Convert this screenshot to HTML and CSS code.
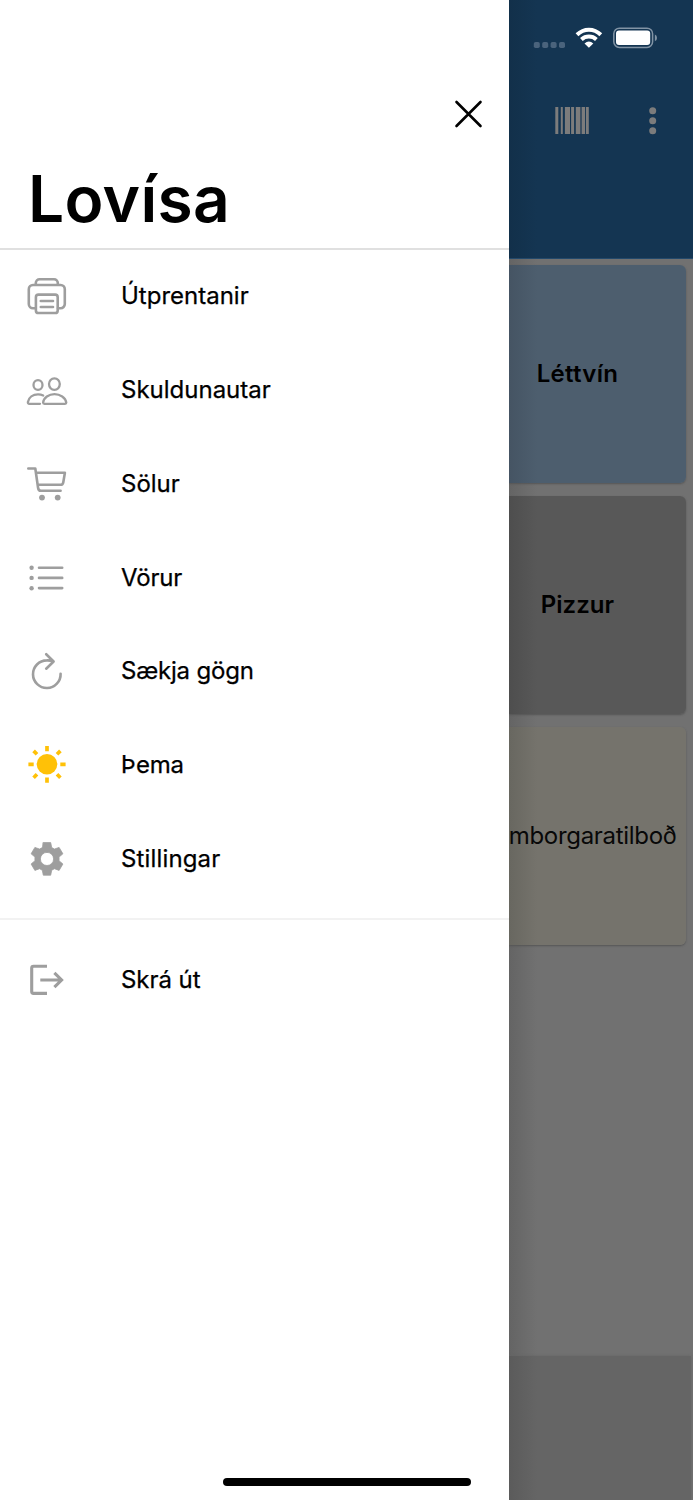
FILE: index.html
```html
<!DOCTYPE html>
<html lang="is">
<head>
<meta charset="utf-8">
<title>Lovísa</title>
<link rel="stylesheet" href="styles.css">
</head>
<body>
<div class="screen">
  <aside class="drawer">
    <header class="drawer-head">
      <button class="close" aria-label="Loka"><svg viewBox="0 0 32 32" width="32" height="32"><path d="M4.5 4L28.5 28M28.5 4L4.5 28"/></svg></button>
      <h1 class="title">Lovísa</h1>
    </header>
    <nav class="menu">
      <a class="item"><svg class="icon" viewBox="23 272 48 48"><path d="M35.5 308.2H33a4.2 4.2 0 0 1-4.2-4.2V289.2a4.2 4.2 0 0 1 4.2-4.2H60.6a4.2 4.2 0 0 1 4.2 4.2V304a4.2 4.2 0 0 1-4.2 4.2H58M35.8 284.6V283a3.8 3.8 0 0 1 3.8-3.8H54a3.8 3.8 0 0 1 3.8 3.8v1.6M40.8 301H53M40.8 307H53"/><rect x="35.9" y="294.6" width="21.8" height="18.4" rx="2.6"/></svg><span class="label l1">Útprentanir</span></a>
      <a class="item"><svg class="icon thin" viewBox="23 366 48 48"><ellipse cx="38" cy="385" rx="4.5" ry="4.9"/><ellipse cx="54.4" cy="384.1" rx="5.4" ry="5.8"/><path d="M43.1 402.6C43.5 397.5 49 394.1 54.5 394.1S65.6 397.5 66.3 402.6Q66.3 403.8 65 403.8H44.5Q43.1 403.8 43.1 402.6ZM40 403.8H29.4Q27.6 403.8 27.9 402C28.8 397.3 33 394.4 38 394.4Q40.9 394.4 43.2 395.5"/></svg><span class="label l2">Skuldunautar</span></a>
      <a class="item"><svg class="icon" viewBox="23 459.8 48 48"><path d="M28.3 468.3H35.3L38.1 487.8Q38.5 490.6 41 490.6H60.6M36 472.6H64.9L63.3 482Q62.9 484.6 60.5 484.6H37.8"/><g class="solid"><circle cx="42" cy="497.4" r="2.9"/><circle cx="57.7" cy="497.4" r="2.9"/></g></svg><span class="label l3">Sölur</span></a>
      <a class="item"><svg class="icon" viewBox="23 553.5 48 48"><path class="bars" d="M39 567.3H62.2M39 577.4H62.2M39 587.6H62.2"/><g class="solid"><circle cx="31.6" cy="567.2" r="2.2"/><circle cx="31.6" cy="577.4" r="2.2"/><circle cx="31.6" cy="587.7" r="2.2"/></g></svg><span class="label l4">Vörur</span></a>
      <a class="item"><svg class="icon" viewBox="23 647 48 48"><path d="M60.6 673.7A13.8 13.8 0 1 1 46.8 660.4Q50.2 660.3 53.4 661.3M46.2 654.2L53.6 661.5L46.2 668.7"/></svg><span class="label l5">Sækja gögn</span></a>
      <a class="item"><svg class="icon sun" viewBox="23 740.9 48 48"><circle cx="47" cy="764.2" r="10.3"/><path d="M47 745.8v5.3M47 777.3v5.3M28.4 764.2h5.3M60.3 764.2h5.3M33.6 750.8l3.4 3.4M60.4 750.8l-3.4 3.4M33.6 777.6l3.4-3.4M60.4 777.6l-3.4-3.4"/></svg><span class="label l6">Þema</span></a>
      <a class="item"><svg class="icon gear" viewBox="23 834.8 48 48"><path fill-rule="evenodd" d="M43.3 842.4H50.7L51.7 847.4Q53 848 54.4 848.9L59.1 847.2L62.9 853.6L59 856.9Q59.2 858.7 59 860.5L62.9 863.8L59.1 870.2L54.4 868.5Q53 869.4 51.7 870L50.7 875H43.3L42.3 870Q41 869.4 39.6 868.5L34.9 870.2L31.1 863.8L35 860.5Q34.8 858.7 35 856.9L31.1 853.6L34.9 847.2L39.6 848.9Q41 848 42.3 847.4ZM47 852.1A6.6 6.6 0 1 0 47 865.3A6.6 6.6 0 1 0 47 852.1Z"/></svg><span class="label l7">Stillingar</span></a>
    </nav>
    <a class="item logout"><svg class="icon exit" viewBox="23 955.2 48 48"><path d="M47 965.4H33.5Q31.7 965.4 31.7 967.2V990.8Q31.7 992.6 33.5 992.6H47M40.3 979.2H62M54.4 972L61.6 979.2L54.4 986.4"/></svg><span class="label l8">Skrá út</span></a>
  </aside>
  <main class="page">
    <header class="appbar">
      <div class="status">
        <svg viewBox="525 20 140 40" width="140" height="40">
          <g fill="#4a637c"><rect x="533.8" y="42" width="6" height="6" rx="1.8"/><rect x="542.2" y="42" width="6" height="6" rx="1.8"/><rect x="550.6" y="42" width="6" height="6" rx="1.8"/><rect x="559" y="42" width="6" height="6" rx="1.8"/></g>
          <g fill="none" stroke="#fff" stroke-width="4"><path d="M577 34.8Q582.2 29.8 588.9 29.8T600.8 34.8M581.4 39.4Q584.6 36.5 588.9 36.5T596.4 39.4"/></g><path fill="#fff" d="M588.9 47.8L584.5 43.5Q588.9 39.7 593.3 43.5Z"/>
          <rect x="613.8" y="28.2" width="38.8" height="19.2" rx="5.6" fill="none" stroke="#8294a5" stroke-width="1.5"/><rect x="616" y="30.6" width="34.2" height="14.4" rx="3" fill="#fff"/><path fill="#8294a5" d="M654.9 34.6Q657 35.6 657 37.9T654.9 41.2Z"/>
        </svg>
      </div>
      <div class="tools">
        <svg class="barcode" viewBox="555 107 34 27" width="34" height="27"><path d="M555.3 107h3v27h-3zM560.8 107h2v27h-2zM564.9 107h5.1v27h-5.1zM571.1 107h3v27h-3zM575.8 107h4.6v27h-4.6zM581.6 107h3.5v27h-3.5zM586 107h2.8v27h-2.8z"/></svg>
        <svg viewBox="0 0 8 28" width="8" height="28"><circle cx="3.7" cy="3.8" r="3.5"/><circle cx="3.7" cy="13.8" r="3.5"/><circle cx="3.7" cy="23.8" r="3.5"/></svg>
      </div>
    </header>
    <section class="cards">
      <div class="card wine"><span class="c1">Léttvín</span></div>
      <div class="card pizza"><span class="c2">Pizzur</span></div>
      <div class="card burger"><span class="c3">mborgaratilboð</span></div>
    </section>
    <footer class="bottom"></footer>
  </main>
  <div class="home"></div>
</div>
</body>
</html>
```
FILE: styles.css
```css
* { box-sizing: border-box; }
body { margin: 0; font-family: Inter, "Liberation Sans", sans-serif; color: #000; }
.screen { position: relative; display: flex; width: 693px; height: 1500px; overflow: hidden; background: #717171; }
.drawer { width: 508.7px; flex: none; background: #fff; }
.drawer-head { height: 250px; padding: 98px 24.5px 0 28px; border-bottom: 2px solid #e0e0e0; }
.close { display: block; width: 32px; height: 32px; margin: 0 0 0 auto; padding: 0; border: 0; background: none; }
.close svg { display: block; fill: none; stroke: #000; stroke-width: 2.6; stroke-linecap: round; }
.title { margin: 29px 0 0; font-size: 64px; line-height: 80px; font-weight: 600; letter-spacing: .3px; white-space: nowrap; }
.menu { height: 670.6px; margin-top: -.6px; border-bottom: 2px solid #f2f2f2; }
.item { display: flex; align-items: center; height: 93.75px; padding-left: 23px; }
.logout { height: 119px; }
.icon { flex: none; width: 48px; height: 48px; margin-right: 50px; fill: none; stroke: #9e9e9e; stroke-width: 2.6; stroke-linecap: round; stroke-linejoin: round; }
.thin { stroke-width: 2.3; }
.bars { stroke-width: 2.6; }
.solid { fill: #9e9e9e; stroke: none; }
.sun { stroke: #ffc107; stroke-width: 3.7; stroke-linecap: butt; }
.sun circle { fill: #ffc107; stroke: none; }
.gear { fill: #9e9e9e; stroke-width: .8; }
.exit { stroke-width: 3.1; stroke-linecap: butt; stroke-linejoin: miter; }
.label { font-size: 24px; line-height: 30px; font-weight: 400; white-space: nowrap; letter-spacing: 0; -webkit-text-stroke: .25px #000; }
.l4 { letter-spacing: -.15px; }
.l5 { letter-spacing: -.2px; }
.l6 { letter-spacing: -.25px; }
.l7 { letter-spacing: .15px; }
.l8 { letter-spacing: -.05px; }
.page { flex: 1; min-width: 0; display: flex; flex-direction: column; overflow: hidden; background: linear-gradient(90deg, #646464, #717171 28px); }
.appbar { height: 259px; padding: 20px 0 0 16.3px; background: linear-gradient(90deg, #12304a, #143552 28px); border-bottom: 1px solid #23496b; }
.status { height: 40px; }
.status svg { display: block; }
.tools { display: flex; align-items: center; gap: 60px; margin-top: 46.5px; padding-left: 30px; }
.tools svg { display: block; fill: #7c7c7c; }
.cards { display: flex; flex-direction: column; gap: 13px; padding: 6px 7px 0 0; }
.card { display: flex; align-items: center; height: 218px; padding-bottom: 1px; border-radius: 0 6px 6px 0; box-shadow: 0 1px 2px #555; white-space: nowrap; font-size: 24px; font-weight: 600; }
.wine { background: linear-gradient(90deg, #455463, #4d5e6e 28px); padding-left: 28px; letter-spacing: .3px; }
.pizza { background: linear-gradient(90deg, #4e4e4e, #585858 28px); padding-left: 32px; letter-spacing: .05px; }
.burger { background: linear-gradient(90deg, #686760, #75736c 28px); font-weight: 400; color: #080808; letter-spacing: -.3px; }
.bottom { height: 144px; margin: auto 2px 0 0; background: linear-gradient(90deg, #5b5b5b, #656565 28px); box-shadow: 0 0 3px #656565; }
.home { position: absolute; left: 222.5px; top: 1478px; width: 248px; height: 8px; border-radius: 4px; background: #000; }
```
